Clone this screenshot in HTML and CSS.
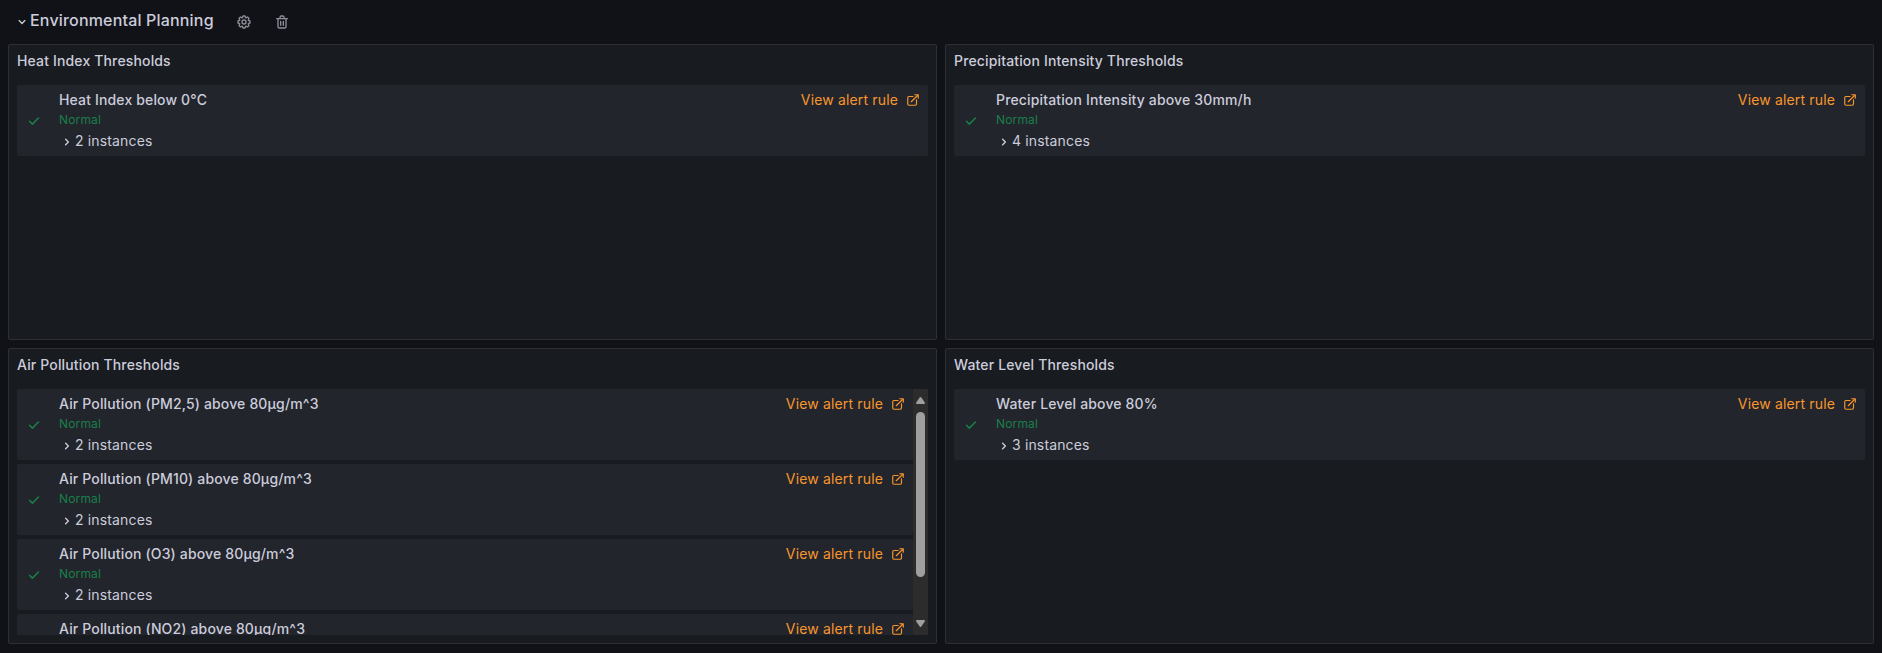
FILE: index.html
```html
<!DOCTYPE html>
<html lang="en">
<head>
<meta charset="utf-8">
<title>Environmental Planning</title>
<link rel="stylesheet" href="styles.css">
</head>
<body>
<svg class="defs" width="0" height="0" aria-hidden="true">
  <symbol id="check" viewBox="0 0 24 24"><path d="M18.71,7.21a1,1,0,0,0-1.42,0L9.84,14.67,6.71,11.53A1,1,0,1,0,5.29,13l3.84,3.84a1,1,0,0,0,1.42,0l8.16-8.16A1,1,0,0,0,18.71,7.21Z"/></symbol>
  <symbol id="down" viewBox="0 0 24 24"><path d="M17,9.17a1,1,0,0,0-1.41,0L12,12.71,8.46,9.17a1,1,0,0,0-1.41,0,1,1,0,0,0,0,1.42l4.24,4.24a1,1,0,0,0,1.42,0L17,10.59A1,1,0,0,0,17,9.17Z"/></symbol>
  <symbol id="right" viewBox="0 0 24 24"><path d="M14.83,11.29,10.59,7.05a1,1,0,0,0-1.42,0,1,1,0,0,0,0,1.41L12.71,12,9.17,15.54a1,1,0,0,0,0,1.41,1,1,0,0,0,.71.29,1,1,0,0,0,.71-.29l4.24-4.24A1,1,0,0,0,14.83,11.29Z"/></symbol>
  <symbol id="external" viewBox="0 0 24 24"><path d="M18,10.82a1,1,0,0,0-1,1V19a1,1,0,0,1-1,1H5a1,1,0,0,1-1-1V8A1,1,0,0,1,5,7h7.18a1,1,0,0,0,0-2H5A3,3,0,0,0,2,8V19a3,3,0,0,0,3,3H16a3,3,0,0,0,3-3V11.82A1,1,0,0,0,18,10.82Zm3.92-8.2a1,1,0,0,0-.54-.54A1,1,0,0,0,21,2H15a1,1,0,0,0,0,2h3.59L8.29,14.29a1,1,0,0,0,0,1.42,1,1,0,0,0,1.42,0L20,5.41V9a1,1,0,0,0,2,0V3A1,1,0,0,0,21.92,2.62Z"/></symbol>
  <symbol id="trash" viewBox="0 0 24 24"><path d="M10,18a1,1,0,0,0,1-1V11a1,1,0,0,0-2,0v6A1,1,0,0,0,10,18ZM20,6H16V5a3,3,0,0,0-3-3H11A3,3,0,0,0,8,5V6H4A1,1,0,0,0,4,8H5V19a3,3,0,0,0,3,3h8a3,3,0,0,0,3-3V8h1a1,1,0,0,0,0-2ZM10,5a1,1,0,0,1,1-1h2a1,1,0,0,1,1,1V6H10Zm7,14a1,1,0,0,1-1,1H8a1,1,0,0,1-1-1V8H17Zm-3-1a1,1,0,0,0,1-1V11a1,1,0,0,0-2,0v6A1,1,0,0,0,14,18Z"/></symbol>
  <symbol id="cog" viewBox="0 0 24 24"><path d="M21.32,9.55l-1.89-.63.89-1.78A1,1,0,0,0,20.13,6L18,3.87a1,1,0,0,0-1.15-.19l-1.78.89-.63-1.89A1,1,0,0,0,13.5,2h-3a1,1,0,0,0-.95.68L8.92,4.57,7.14,3.68A1,1,0,0,0,6,3.87L3.87,6a1,1,0,0,0-.19,1.15l.89,1.78-1.89.63A1,1,0,0,0,2,10.5v3a1,1,0,0,0,.68.95l1.89.63-.89,1.78A1,1,0,0,0,3.87,18L6,20.13a1,1,0,0,0,1.15.19l1.78-.89.63,1.89a1,1,0,0,0,.95.68h3a1,1,0,0,0,.95-.68l.63-1.89,1.78.89A1,1,0,0,0,18,20.13L20.13,18a1,1,0,0,0,.19-1.15l-.89-1.78,1.89-.63A1,1,0,0,0,22,13.5v-3A1,1,0,0,0,21.32,9.55ZM20,12.78l-1.2.4A2,2,0,0,0,17.64,16l.57,1.14-1.1,1.1L16,17.64a2,2,0,0,0-2.79,1.16l-.4,1.2H11.22l-.4-1.2A2,2,0,0,0,8,17.64l-1.14.57-1.1-1.1L6.36,16A2,2,0,0,0,5.2,13.18L4,12.78V11.22l1.2-.4A2,2,0,0,0,6.36,8L5.79,6.89l1.1-1.1L8,6.36A2,2,0,0,0,10.82,5.2l.4-1.2h1.56l.4,1.2A2,2,0,0,0,16,6.36l1.14-.57,1.1,1.1L17.64,8a2,2,0,0,0,1.16,2.79l1.2.4ZM12,8a4,4,0,1,0,4,4A4,4,0,0,0,12,8Zm0,6a2,2,0,1,1,2-2A2,2,0,0,1,12,14Z"/></symbol>
</svg>

<header class="row-header">
  <svg class="icon"><use href="#down"/></svg>
  <h1 class="row-title">Environmental Planning</h1>
  <svg class="icon row-action"><use href="#cog"/></svg>
  <svg class="icon row-action"><use href="#trash"/></svg>
</header>

<main class="grid">
  <section class="panel">
    <h2 class="panel-title">Heat Index Thresholds</h2>
    <div class="panel-body">
      <ul class="rules">
        <li class="rule">
          <svg class="icon state"><use href="#check"/></svg>
          <div class="info"><div class="name">Heat Index below 0°C</div><div class="status">Normal</div><div class="instances"><svg class="icon"><use href="#right"/></svg>2 instances</div></div>
          <a class="link">View alert rule<svg class="icon"><use href="#external"/></svg></a>
        </li>
      </ul>
    </div>
  </section>

  <section class="panel">
    <h2 class="panel-title">Precipitation Intensity Thresholds</h2>
    <div class="panel-body">
      <ul class="rules">
        <li class="rule">
          <svg class="icon state"><use href="#check"/></svg>
          <div class="info"><div class="name">Precipitation Intensity above 30mm/h</div><div class="status">Normal</div><div class="instances"><svg class="icon"><use href="#right"/></svg>4 instances</div></div>
          <a class="link">View alert rule<svg class="icon"><use href="#external"/></svg></a>
        </li>
      </ul>
    </div>
  </section>

  <section class="panel">
    <h2 class="panel-title">Air Pollution Thresholds</h2>
    <div class="panel-body">
      <ul class="rules">
        <li class="rule">
          <svg class="icon state"><use href="#check"/></svg>
          <div class="info"><div class="name">Air Pollution (PM2,5) above 80µg/m^3</div><div class="status">Normal</div><div class="instances"><svg class="icon"><use href="#right"/></svg>2 instances</div></div>
          <a class="link">View alert rule<svg class="icon"><use href="#external"/></svg></a>
        </li>
        <li class="rule">
          <svg class="icon state"><use href="#check"/></svg>
          <div class="info"><div class="name">Air Pollution (PM10) above 80µg/m^3</div><div class="status">Normal</div><div class="instances"><svg class="icon"><use href="#right"/></svg>2 instances</div></div>
          <a class="link">View alert rule<svg class="icon"><use href="#external"/></svg></a>
        </li>
        <li class="rule">
          <svg class="icon state"><use href="#check"/></svg>
          <div class="info"><div class="name">Air Pollution (O3) above 80µg/m^3</div><div class="status">Normal</div><div class="instances"><svg class="icon"><use href="#right"/></svg>2 instances</div></div>
          <a class="link">View alert rule<svg class="icon"><use href="#external"/></svg></a>
        </li>
        <li class="rule">
          <div class="state"></div>
          <div class="info"><div class="name">Air Pollution (NO2) above 80µg/m^3</div></div>
          <a class="link">View alert rule<svg class="icon"><use href="#external"/></svg></a>
        </li>
      </ul>
      <div class="scrollbar">
        <svg class="arrow" viewBox="0 0 9 7"><path d="M3.7.6Q4.5-.4 5.3.6L8.8 5.6Q9.3 7 8 7H1Q-.3 7 .2 5.6Z"/></svg>
        <div class="thumb"></div>
        <svg class="arrow arrow-down" viewBox="0 0 9 7"><path d="M3.7 6.4Q4.5 7.4 5.3 6.4L8.8 1.4Q9.3 0 8 0H1Q-.3 0 .2 1.4Z"/></svg>
      </div>
    </div>
  </section>

  <section class="panel">
    <h2 class="panel-title">Water Level Thresholds</h2>
    <div class="panel-body">
      <ul class="rules">
        <li class="rule">
          <svg class="icon state"><use href="#check"/></svg>
          <div class="info"><div class="name">Water Level above 80%</div><div class="status">Normal</div><div class="instances"><svg class="icon"><use href="#right"/></svg>3 instances</div></div>
          <a class="link">View alert rule<svg class="icon"><use href="#external"/></svg></a>
        </li>
      </ul>
    </div>
  </section>
</main>
</body>
</html>
```
FILE: styles.css
```css
* { box-sizing: border-box; }

body {
  margin: 0;
  height: 653px;
  overflow: hidden;
  background: #111217;
  color: #ccccdc;
  font: 400 14px/21px Inter, sans-serif;
  letter-spacing: 0.15px;
}

.defs { display: none; }

.icon {
  display: block;
  flex: none;
  width: 16px;
  height: 16px;
  fill: currentColor;
}

.row-header {
  display: flex;
  align-items: center;
  height: 44px;
  padding-left: 14px;
}

.row-title {
  margin: 0 22px 4px 0;
  font-size: 16px;
  font-weight: 500;
  line-height: 22px;
  letter-spacing: 0.18px;
}

.row-action {
  margin-right: 22px;
  color: #8e8e9a;
}

.grid {
  display: grid;
  grid-template-columns: 1fr 1fr;
  grid-auto-rows: 296px;
  gap: 8px;
  padding: 0 8px;
}

.panel {
  display: flex;
  flex-direction: column;
  min-width: 0;
  border: 1px solid #2d2f34;
  border-radius: 2px;
  background: #181b1f;
}

.panel-title {
  flex: none;
  height: 32px;
  margin: 0;
  padding: 0 8px;
  font-size: 14px;
  font-weight: 500;
  line-height: 31px;
}

.panel-body {
  display: flex;
  flex: 1;
  min-height: 0;
  padding: 8px;
}

.rules {
  display: flex;
  flex: 1;
  flex-direction: column;
  gap: 4px;
  margin: 0;
  padding: 0;
  overflow: hidden;
  list-style: none;
}

.rule {
  display: flex;
  flex: none;
  height: 71px;
  padding: 4px 8px;
  border-radius: 2px;
  background: #22252b;
}

.state {
  width: 18px;
  height: 18px;
  margin: 23px 16px 0 0;
  color: #1a7f4b;
}

.info { flex: 1; }

.name {
  height: 22px;
  font-weight: 500;
}

.status {
  height: 18px;
  color: #1a7f4b;
  font-size: 12px;
  line-height: 17px;
}

.instances {
  display: flex;
  align-items: flex-start;
  padding-top: 1px;
}

.instances .icon { margin-top: 4px; }

.link {
  display: flex;
  align-items: flex-start;
  gap: 8px;
  height: 22px;
  color: #f8962e;
}

.link .icon {
  width: 14px;
  height: 14px;
  margin-top: 4px;
}

.scrollbar {
  display: flex;
  flex-direction: column;
  align-items: center;
  width: 15px;
  padding: 8px 0;
  background: #2c2c2c;
}

.arrow {
  width: 9px;
  height: 7px;
  fill: #9f9f9f;
}

.thumb {
  width: 9px;
  height: 165px;
  margin-top: 8px;
  border-radius: 5px;
  background: #9f9f9f;
}

.arrow-down { margin-top: auto; }
```
